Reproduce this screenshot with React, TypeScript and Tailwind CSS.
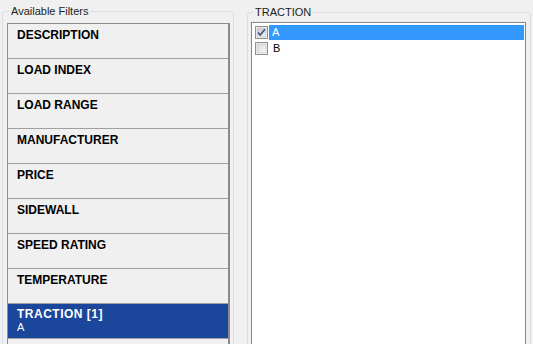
import React from "react"

const filters = [
  "DESCRIPTION",
  "LOAD INDEX",
  "LOAD RANGE",
  "MANUFACTURER",
  "PRICE",
  "SIDEWALL",
  "SPEED RATING",
  "TEMPERATURE",
]

function CheckBox({ checked }: { checked?: boolean }) {
  return (
    <svg width="13" height="13" viewBox="0 0 13 13" className="shrink-0">
      <defs>
        <linearGradient id={checked ? "cbOn" : "cbOff"} x1="0" y1="0" x2="1" y2="1">
          <stop offset="0" stopColor={checked ? "#c8c8c8" : "#d6d6d6"} />
          <stop offset="1" stopColor={checked ? "#f2f2f2" : "#fbfbfb"} />
        </linearGradient>
      </defs>
      <rect x="0.5" y="0.5" width="12" height="12" fill="#fff" stroke="#8f8f8f" />
      <rect x="2" y="2" width="9" height="9" fill={`url(#${checked ? "cbOn" : "cbOff"})`} stroke="#c4c4c4" strokeWidth="0.8" />
      {checked && (
        <path d="M3 6.5 L5.2 9 L10 3.2" fill="none" stroke="#41558c" strokeWidth="1.7" />
      )}
    </svg>
  )
}

export default function App() {
  return (
    <div className="flex h-[344px] w-[533px] gap-[13px] overflow-hidden bg-[#f0f0f0] pl-[2px] font-['Liberation_Sans',Arial,sans-serif] text-black">
      {/* Available Filters */}
      <fieldset className="mt-[5px] h-[380px] w-[232px] shrink-0 rounded-[3px] border border-[#d5dfe5] pl-[4px] pr-[3px] pt-[5px]">
        <legend className="ml-[2px] px-[2px] text-[11px] leading-[13px] text-[#1e1e1e]">Available Filters</legend>
        <div className="border border-[#8c8c8c] border-r-2">
          {filters.map((f) => (
            <div key={f} className="h-[35px] border-b border-[#a0a0a0] pl-[9px] pt-[4px] text-[12px] font-bold leading-[14px]">
              {f}
            </div>
          ))}
          <div className="h-[35px] border-b border-[#a0a0a0] bg-[#1a469c] pl-[9px] pt-[3px] text-white">
            <div className="text-[12px] font-bold leading-[14px] tracking-[0.5px]">TRACTION [1]</div>
            <div className="text-[11px] leading-[13px]">A</div>
          </div>
          <div className="h-[35px]" />
        </div>
      </fieldset>

      {/* Traction values */}
      <fieldset className="mt-[6px] h-[380px] w-[284px] shrink-0 rounded-[3px] border border-[#d5dfe5] pl-[3px] pr-[4px] pt-[3px]">
        <legend className="ml-[2px] px-[2px] text-[11px] leading-[13px] text-[#1e1e1e]">TRACTION</legend>
        <div className="h-[360px] border border-[#828790] bg-white p-[1px]">
          <div className="flex h-[16px] items-center gap-[1px] pl-[2px]">
            <CheckBox checked />
            <div className="flex h-[15px] flex-1 items-center bg-[#3399ff] pl-[3px] text-[11px] text-white">A</div>
          </div>
          <div className="flex h-[16px] items-center gap-[1px] pl-[2px]">
            <CheckBox />
            <div className="flex h-[15px] flex-1 items-center pl-[4px] text-[11px]">B</div>
          </div>
        </div>
      </fieldset>
    </div>
  )
}
